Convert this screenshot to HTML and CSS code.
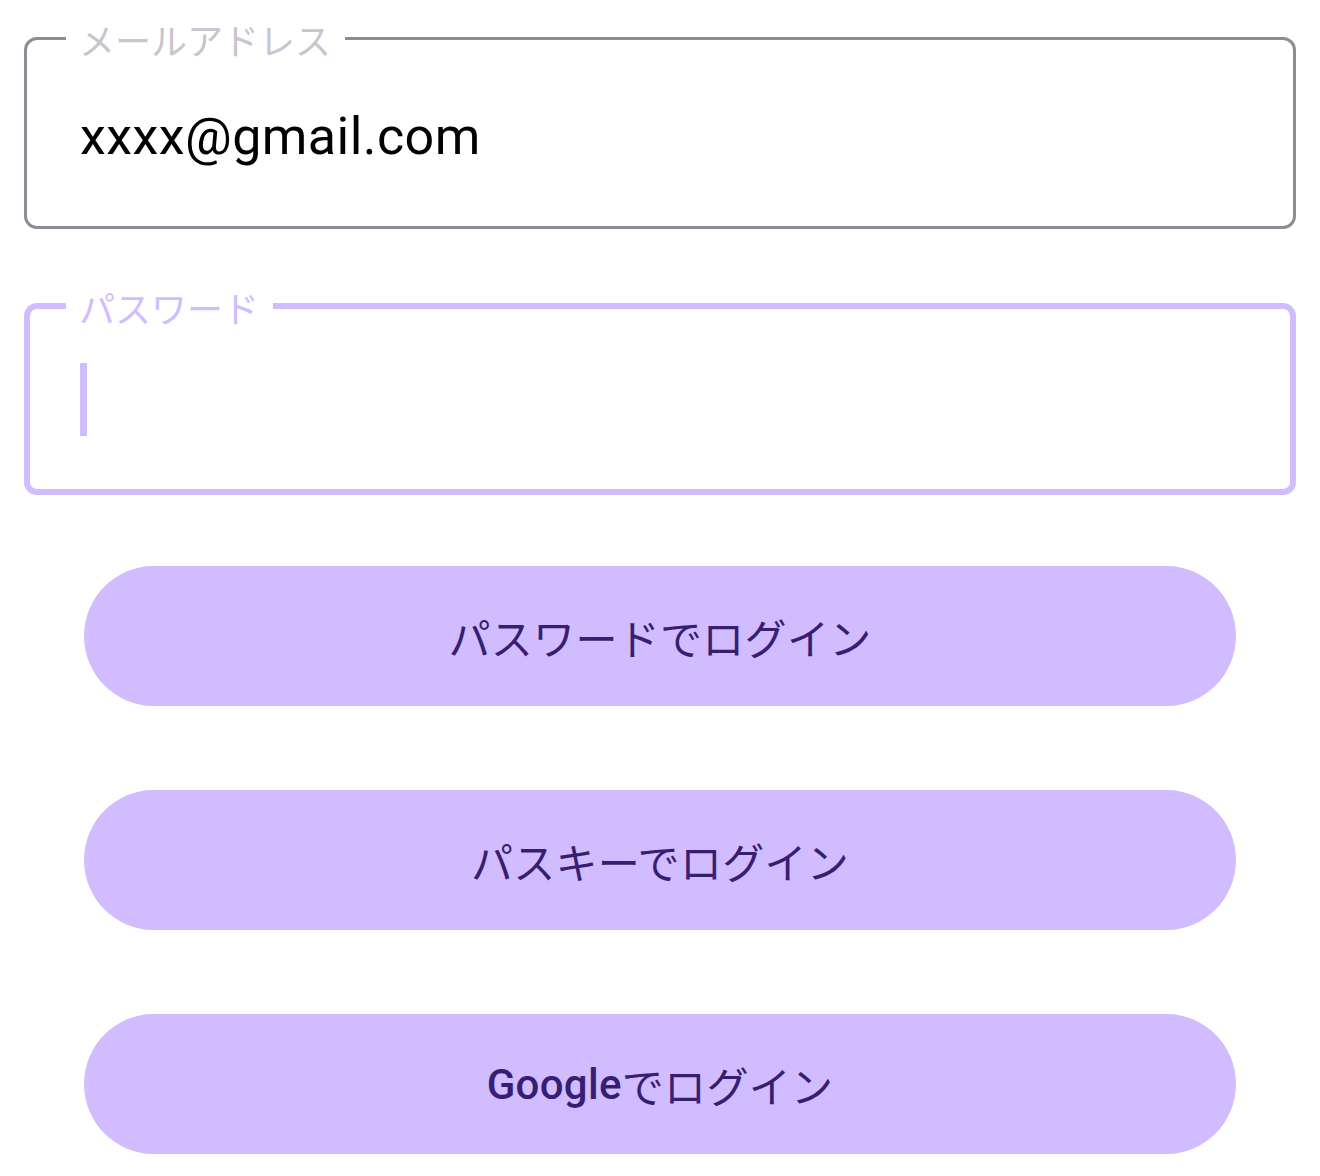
FILE: index.html
```html
<!DOCTYPE html>
<html lang="ja">
<head>
<meta charset="utf-8">
<title>ログイン</title>
<link rel="stylesheet" href="styles.css">
</head>
<body>
<main class="login">
  <div class="field field-email">
    <span class="field-label">メールアドレス</span>
    <div class="field-value">xxxx@gmail.com</div>
  </div>
  <div class="field field-password">
    <span class="field-label">パスワード</span>
    <div class="caret"></div>
  </div>
  <div class="actions">
    <button class="btn" type="button">パスワードでログイン</button>
    <button class="btn" type="button">パスキーでログイン</button>
    <button class="btn" type="button"><span class="latin">Google</span>でログイン</button>
  </div>
</main>
</body>
</html>
```
FILE: styles.css
```css
* {
  box-sizing: border-box;
}

html, body {
  margin: 0;
  padding: 0;
  background: #ffffff;
}

body {
  font-family: "Roboto", "Noto Sans CJK JP", sans-serif;
  width: 1320px;
  height: 1176px;
  overflow: hidden;
}

.login {
  padding: 37px 24px 0 24px;
  display: flex;
  flex-direction: column;
}

.field {
  position: relative;
  height: 192px;
  border-radius: 13px;
  border-style: solid;
}

.field-email {
  border-width: 3px;
  border-color: #8f8c95;
}

.field-password {
  margin-top: 74px;
  border-width: 6px;
  border-color: #d0bcff;
}

.field-label {
  position: absolute;
  background: #ffffff;
  padding: 0 14px 0 13px;
  font-family: "Noto Sans CJK JP", sans-serif;
  font-size: 36px;
  line-height: 40px;
  white-space: nowrap;
}

.field-email .field-label {
  left: 39px;
  top: -21px;
  color: #cac4d0;
}

.field-password .field-label {
  left: 36px;
  top: -22px;
  color: #d0bcff;
}

.field-value {
  padding: 67px 0 0 53px;
  font-size: 52px;
  line-height: 60px;
  letter-spacing: 0.45px;
  color: #000000;
}

.caret {
  margin: 54px 0 0 50px;
  width: 7px;
  height: 73px;
  background: #d0bcff;
}

.actions {
  margin: 71px 60px 0 60px;
  display: flex;
  flex-direction: column;
  gap: 84px;
}

.btn {
  height: 140px;
  border: none;
  border-radius: 70px;
  background: #d0bcff;
  color: #381e72;
  font-family: "Roboto", "Noto Sans CJK JP", sans-serif;
  font-size: 42px;
  font-weight: 400;
  letter-spacing: 0.3px;
  display: flex;
  align-items: center;
  justify-content: center;
  padding: 0;
}

.latin {
  font-weight: 500;
}
```
